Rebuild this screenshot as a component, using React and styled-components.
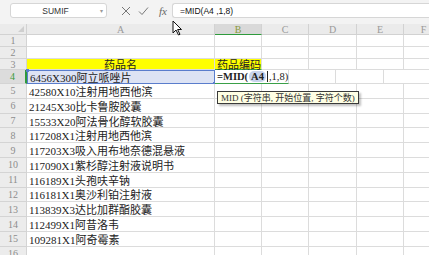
import React from "react";
import styled, { createGlobalStyle } from "styled-components";

const Global = createGlobalStyle`
  html, body { margin: 0; padding: 0; background: #fff; }
  body { width: 429px; height: 255px; overflow: hidden; }
  * { box-sizing: border-box; }
`;

const serif = `"Liberation Serif", "Noto Sans CJK SC", serif`;
const sans = `"Liberation Sans", Arial, sans-serif`;

const Page = styled.div`
  position: relative;
  width: 429px;
  height: 255px;
  overflow: hidden;
  background: #fff;
`;

const FormulaBar = styled.div`
  height: 24px;
  background: #f3f3f3;
  display: flex;
  align-items: flex-start;
  padding: 3px 0 0 10px;
`;

const NameBox = styled.div`
  width: 97px;
  height: 15px;
  background: #fff;
  border: 1px solid #d6d6d6;
  border-radius: 3px;
  display: flex;
  align-items: center;
  font-family: ${sans};
  font-size: 8.5px;
  color: #333;
  padding: 0 3px 0 0;
  span { flex: 1; text-align: center; }
  i { font-style: normal; color: #999; font-size: 6px; }
`;

const Tools = styled.div`
  display: flex;
  align-items: center;
  height: 15px;
  gap: 7px;
  padding-left: 14px;
  width: 65px;
  color: #777;
`;

const Fx = styled.span`
  font-family: ${serif};
  font-style: italic;
  font-size: 11px;
  color: #666;
  margin-left: 3px;
`;

const Input = styled.div`
  flex: 1;
  height: 15px;
  background: #fff;
  border: 1px solid #d6d6d6;
  border-right: none;
  border-radius: 3px 0 0 3px;
  font-family: ${sans};
  font-size: 8.5px;
  color: #111;
  display: flex;
  align-items: center;
  padding-left: 7px;
`;

const Sheet = styled.div`
  display: flex;
  flex-direction: column;
`;

const Row = styled.div`
  display: flex;
  height: ${(p) => p.$h}px;
`;

const widths = [27, 188, 47, 47, 48, 47, 40];

const Head = styled.div`
  flex: 0 0 ${(p) => p.$w}px;
  background: ${(p) => (p.$active ? "#d9d9d9" : "#ebebeb")};
  border-right: 1px solid #d2d2d2;
  border-bottom: 1px solid ${(p) => (p.$active ? "#2e9a3c" : "#d2d2d2")};
  font-family: ${serif};
  font-size: 10px;
  color: ${(p) => (p.$active ? "#8a9a3a" : "#9a9a9a")};
  display: flex;
  align-items: center;
  justify-content: center;
  position: relative;
`;

const Corner = styled(Head)`
  &::after {
    content: "";
    position: absolute;
    right: 2px;
    bottom: 2px;
    border-left: 6px solid transparent;
    border-bottom: 6px solid #cfcfcf;
  }
`;

const RowNum = styled.div`
  flex: 0 0 27px;
  background: ${(p) => (p.$active ? "#dcdcdc" : "#ececec")};
  border-right: ${(p) => (p.$active ? "2px solid #2e9a3c" : "1px solid #d4d4d4")};
  border-bottom: 1px solid #d4d4d4;
  font-family: ${serif};
  font-size: 10px;
  color: ${(p) => (p.$active ? "#3a9a3a" : "#8c8c8c")};
  display: flex;
  align-items: center;
  justify-content: center;
`;

const Cell = styled.div`
  flex: 0 0 ${(p) => p.$w}px;
  border-right: 1px solid #dcdcdc;
  border-bottom: 1px solid ${(p) => (p.$green ? "#3aa048" : "#dcdcdc")};
  background: ${(p) => (p.$yellow ? "#ffff00" : "#fff")};
  font-family: ${serif};
  font-size: 11px;
  color: #222;
  display: flex;
  align-items: center;
  justify-content: ${(p) => (p.$center ? "center" : "flex-start")};
  padding-left: ${(p) => (p.$center ? 0 : 2)}px;
  white-space: nowrap;
  position: relative;
  overflow: visible;
`;

const Selected = styled(Cell)`
  background: #dde3f4;
  border: 1px solid #5a7dcc;
  &::before, &::after {
    content: "";
    position: absolute;
    width: 3px;
    height: 3px;
    background: #5a7dcc;
  }
  &::before { left: -2px; top: -2px; }
  &::after { right: -2px; bottom: -2px; }
`;

const Editing = styled(Cell)`
  border-bottom: 1px solid #3aa048;
  font-weight: bold;
  font-size: 10.5px;
  padding-left: 2px;
  z-index: 2;
  em {
    font-style: normal;
    background: #c8d3ec;
    border-radius: 5px;
    padding: 0 2px;
    margin: 0 1px;
  }
  u {
    text-decoration: none;
    font-weight: normal;
    border-left: 1px solid #222;
    padding-left: 1px;
  }
`;

const Tip = styled.div`
  position: absolute;
  left: 217px;
  top: 91px;
  height: 13px;
  padding: 0 3px;
  background: #ffffe4;
  border: 1px solid #3a3a3a;
  box-shadow: 2px 2px 2px rgba(0, 0, 0, 0.25);
  font-family: ${serif};
  font-size: 9px;
  color: #333;
  display: flex;
  align-items: center;
  white-space: nowrap;
  z-index: 5;
`;

const Cursor = styled.svg`
  position: absolute;
  left: 172px;
  top: 20px;
  z-index: 6;
`;

const drugs = [
  "42580X10注射用地西他滨",
  "21245X30比卡鲁胺胶囊",
  "15533X20阿法骨化醇软胶囊",
  "117208X1注射用地西他滨",
  "117203X3吸入用布地奈德混悬液",
  "117090X1紫杉醇注射液说明书",
  "116189X1头孢呋辛钠",
  "116181X1奥沙利铂注射液",
  "113839X3达比加群酯胶囊",
  "112499X1阿昔洛韦",
  "109281X1阿奇霉素",
  "",
];

const Blanks = ({ from = 2 }) =>
  widths.slice(from).map((w, i) => <Cell key={i} $w={w} />);

export default function App() {
  return (
    <Page>
      <Global />
      <FormulaBar>
        <NameBox>
          <span>SUMIF</span>
          <i>▾</i>
        </NameBox>
        <Tools>
          <svg width="10" height="10" viewBox="0 0 10 10">
            <path d="M1 1L9 9M9 1L1 9" stroke="#777" strokeWidth="1" fill="none" />
          </svg>
          <svg width="11" height="10" viewBox="0 0 11 10">
            <path d="M1 5.5L4 8.5L10 1.5" stroke="#777" strokeWidth="1" fill="none" />
          </svg>
          <Fx>fx</Fx>
        </Tools>
        <Input>=MID(A4 ,1,8)</Input>
      </FormulaBar>
      <Sheet>
        <Row $h={11}>
          <Corner $w={27} />
          <Head $w={188}>A</Head>
          <Head $w={47} $active>B</Head>
          <Head $w={47}>C</Head>
          <Head $w={48}>D</Head>
          <Head $w={47}>E</Head>
          <Head $w={40}>F</Head>
        </Row>
        <Row $h={12}>
          <RowNum>1</RowNum>
          <Blanks from={1} />
        </Row>
        <Row $h={12}>
          <RowNum>2</RowNum>
          <Blanks from={1} />
        </Row>
        <Row $h={11}>
          <RowNum>3</RowNum>
          <Cell $w={188} $yellow $center>药品名</Cell>
          <Cell $w={47} $yellow $green>药品编码</Cell>
          <Blanks from={3} />
        </Row>
        <Row $h={14}>
          <RowNum $active>4</RowNum>
          <Selected $w={188}>6456X300阿立哌唑片</Selected>
          <Editing $w={47}>
            <b>=MID(</b>
            <em>A4</em>
            <u>,1,8)</u>
          </Editing>
          <Blanks from={3} />
        </Row>
        {drugs.map((d, i) => (
          <Row key={i} $h={14.8}>
            <RowNum>{i + 5}</RowNum>
            <Cell $w={188}>{d}</Cell>
            <Blanks />
          </Row>
        ))}
      </Sheet>
      <Tip>MID (字符串, 开始位置, 字符个数)</Tip>
      <Cursor width="10" height="16" viewBox="0 0 10 16">
        <path d="M1 1L1 13L4 10L6.5 15L8 14.3L5.6 9.5L9.5 9.5Z" fill="#fff" stroke="#111" strokeWidth="1" strokeLinejoin="round" />
      </Cursor>
    </Page>
  );
}
